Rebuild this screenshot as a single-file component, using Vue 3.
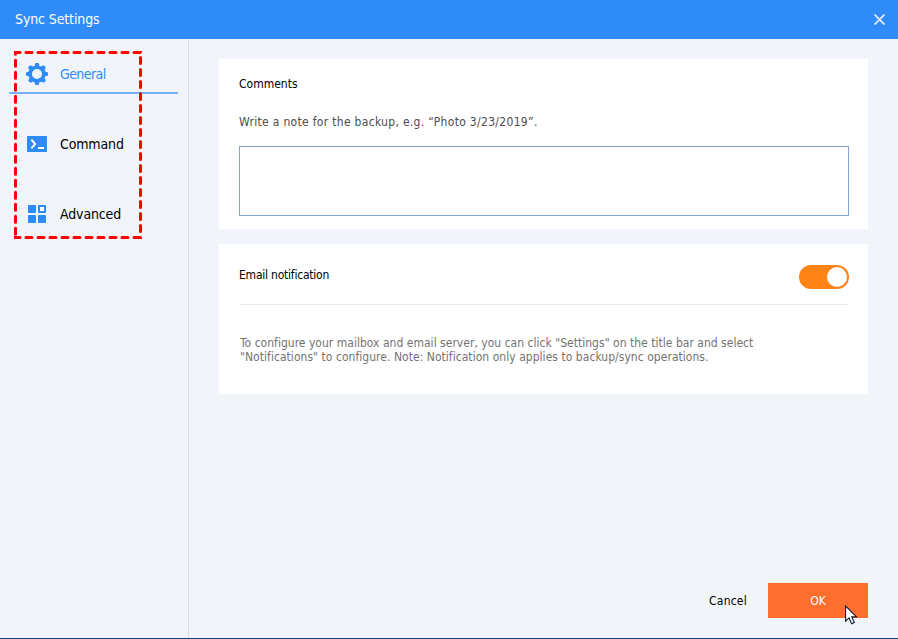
<script setup>
import { ref } from 'vue'

const tabs = ['General', 'Command', 'Advanced']
const active = ref('General')
const comment = ref('')
const emailOn = ref(true)
</script>

<template>
  <div class="window">
    <header class="titlebar">
      <span class="window-title">Sync Settings</span>
      <svg class="close" width="11" height="11" viewBox="0 0 11 11">
        <path d="M.5 .5l10 10M10.5 .5l-10 10" stroke="#d9e9fd" stroke-width="1.9" />
      </svg>
    </header>

    <div class="body">
      <nav class="sidebar">
        <div v-for="tab in tabs" :key="tab" class="tab" :class="{ active: active === tab }" @click="active = tab">
          <svg class="tab-icon" width="22" height="22" viewBox="0 0 22 22">
            <template v-if="tab === 'General'">
              <circle cx="11" cy="11" r="6.9" fill="none" stroke="#2f8bf7" stroke-width="3.8" />
              <g fill="#2f8bf7">
                <rect v-for="n in 8" :key="n" x="8.9" y="0" width="4.2" height="4.5" rx="1.3"
                  :transform="`rotate(${n * 45} 11 11)`" />
              </g>
            </template>
            <template v-else-if="tab === 'Command'">
              <rect x="1" y="3" width="20" height="16" rx=".8" fill="#2f8bf7" />
              <path d="M5.4 6.6l3.8 4.4-3.8 4.4" fill="none" stroke="#fff" stroke-width="2" />
              <path d="M12 15h6" stroke="#fff" stroke-width="2" />
            </template>
            <template v-else>
              <g fill="#2f8bf7">
                <rect x="2" y="2" width="8" height="8" rx=".7" />
                <rect x="2" y="12" width="8" height="8" rx=".7" />
                <rect x="12" y="12" width="8" height="8" rx=".7" />
                <rect x="12" y="2" width="8" height="8" rx=".7" />
              </g>
              <rect x="14" y="4" width="4" height="4" fill="#fff" />
            </template>
          </svg>
          <span class="tab-label" :class="tab.toLowerCase()">{{ tab }}</span>
        </div>
      </nav>

      <div class="main">
        <section class="card comments">
          <h2 class="heading">Comments</h2>
          <p class="hint">Write a note for the backup, e.g. “Photo 3/23/2019”.</p>
          <textarea v-model="comment" class="note"></textarea>
        </section>

        <section class="card email">
          <div class="email-head">
            <h2 class="heading email-title">Email notification</h2>
            <button class="toggle" :class="{ on: emailOn }" @click="emailOn = !emailOn">
              <span class="knob"></span>
            </button>
          </div>
          <p class="description">
            <span class="line-one">To configure your mailbox and email server, you can click "Settings" on the title bar and select</span><br>
            <span class="line-two">"Notifications" to configure. Note: Notification only applies to backup/sync operations.</span>
          </p>
        </section>

        <footer class="actions">
          <button class="btn cancel">Cancel</button>
          <button class="btn ok">OK</button>
        </footer>
      </div>
    </div>

    <!-- Highlight around the tabs -->
    <svg class="highlight" width="128" height="188" viewBox="0 0 128 188">
      <g stroke="#f00" stroke-width="3" stroke-linecap="round" stroke-dasharray="6 6">
        <path d="M0 1.5H127M0 186.5H127" />
        <path d="M1.5 -2.8V187M126.5 -5.5V187" />
      </g>
    </svg>

    <svg class="cursor" width="13" height="20" viewBox="0 0 13 20">
      <path d="M.6 1v15.2l3.5-3.3 2.5 5.8 2.7-1.2-2.5-5.6h4.8z" fill="#fff" stroke="#111a2c" stroke-width="1.1" />
    </svg>
  </div>
</template>

<style>
body {
  margin: 0;
}
</style>

<style scoped>
.window {
  position: relative;
  display: flex;
  flex-direction: column;
  box-sizing: border-box;
  width: 898px;
  height: 639px;
  overflow: hidden;
  background: #f1f5fa;
  border-bottom: 1px solid #0b478c;
  font-family: Tahoma, 'DejaVu Sans Condensed', 'DejaVu Sans', sans-serif;
  font-size: 12px;
  color: #000;
}

.titlebar {
  display: flex;
  align-items: center;
  justify-content: space-between;
  box-sizing: border-box;
  height: 39px;
  padding: 0 13px 0 15px;
  background: #2f8bf7;
}

.window-title {
  margin-top: -2px;
  font-size: 14px;
  letter-spacing: -0.12px;
  color: #fff;
}

.body {
  display: flex;
  flex: 1;
}

.sidebar {
  box-sizing: border-box;
  width: 189px;
  padding-left: 9px;
  border-right: 1px solid #d9dde1;
}

.tab {
  display: flex;
  align-items: center;
  box-sizing: border-box;
  width: 169px;
  height: 70px;
  padding-left: 17px;
  cursor: pointer;
}

.tab:first-child {
  height: 55px;
  padding-top: 17px;
  margin-bottom: 15px;
}

.tab.active {
  border-bottom: 2px solid #78b2fa;
}

.tab-label {
  margin-left: 12px;
  font-size: 14px;
  letter-spacing: -0.14px;
}

.tab-label.general {
  letter-spacing: -0.57px;
}

.tab.active .tab-label {
  color: #2f8bf7;
}

.main {
  display: flex;
  flex: 1;
  flex-direction: column;
  padding: 20px 30px;
}

.card {
  box-sizing: border-box;
  padding: 0 19px 0 20px;
  background: #fff;
}

.comments {
  height: 170px;
  padding-top: 17px;
}

.email {
  height: 150px;
  margin-top: 15px;
}

.heading {
  margin: 0;
  font-size: 12px;
  font-weight: normal;
  line-height: 16px;
}

.hint {
  margin: 22px 0 0;
  line-height: 16px;
  letter-spacing: 0.31px;
  color: #4d4d4d;
}

.note {
  display: block;
  box-sizing: border-box;
  width: 610px;
  height: 70px;
  margin-top: 16px;
  border: 1px solid #84a6d3;
  border-radius: 0;
  outline: none;
  resize: none;
}

.email-head {
  display: flex;
  justify-content: space-between;
  box-sizing: border-box;
  height: 61px;
  padding-top: 21px;
  border-bottom: 1px solid #e6eaf5;
}

.email-title {
  margin-top: 2px;
  letter-spacing: -0.22px;
}

.toggle {
  display: flex;
  box-sizing: border-box;
  width: 50px;
  height: 24px;
  padding: 2px;
  border: none;
  border-radius: 12px;
  background: #bbb;
}

.toggle.on {
  justify-content: flex-end;
  background: #ff8315;
}

.knob {
  width: 20px;
  height: 20px;
  border-radius: 50%;
  background: #fff;
}

.description {
  margin: 31px 0 0 1px;
  line-height: 14px;
  white-space: nowrap;
  color: #737373;
}

.line-one {
  letter-spacing: 0.02px;
}

.line-two {
  letter-spacing: 0.04px;
}

.actions {
  display: flex;
  justify-content: flex-end;
  margin-top: auto;
}

.btn {
  height: 35px;
  padding: 0;
  border: none;
  background: none;
  font-family: inherit;
  font-size: 12px;
}

.cancel {
  width: 80px;
  letter-spacing: 0.2px;
}

.ok {
  width: 100px;
  background: #ff6e2f;
  color: #fff;
}

.highlight {
  position: absolute;
  left: 14px;
  top: 51px;
}

.cursor {
  position: absolute;
  left: 845px;
  top: 605px;
}
</style>
